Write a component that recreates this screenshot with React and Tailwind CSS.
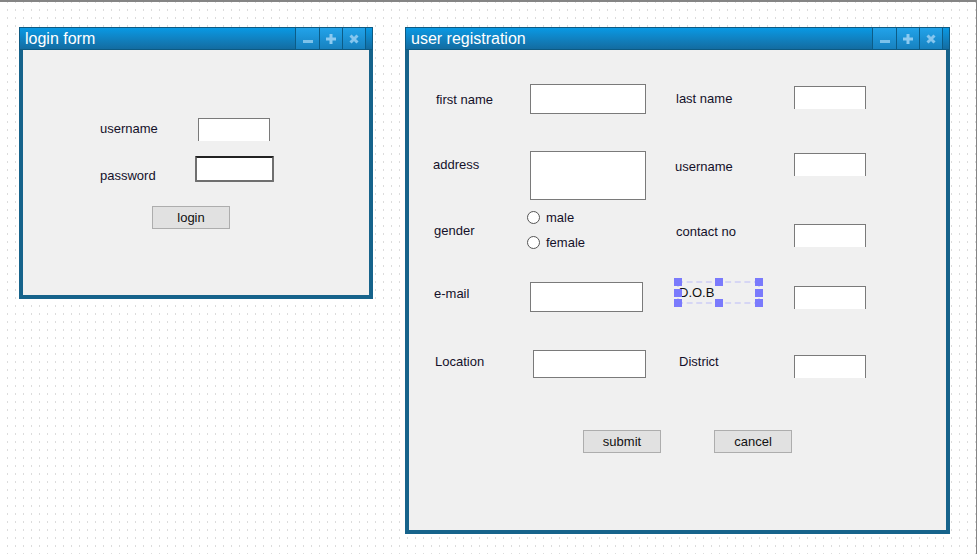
import React from 'react';

const font = "font-['Liberation_Sans',Arial,sans-serif]";

const TitleButtons = () => (
  <div className="mr-[6px] flex border-x border-[#0c5c87]">
    <div className="flex w-[23px] items-end justify-center bg-linear-to-b from-[#22a3ea] to-[#1781bf] pb-[6px]">
      <svg width="10" height="3" viewBox="0 0 10 3">
        <rect width="10" height="3" fill="#7cc2ea" />
      </svg>
    </div>
    <div className="flex w-[23px] items-center justify-center border-l border-[#0c5c87] bg-linear-to-b from-[#22a3ea] to-[#1781bf]">
      <svg width="10" height="10" viewBox="0 0 10 10">
        <rect x="3.5" width="3" height="10" fill="#8ccaf0" />
        <rect y="3.5" width="10" height="3" fill="#8ccaf0" />
      </svg>
    </div>
    <div className="flex w-[23px] items-center justify-center border-l border-[#0c5c87] bg-linear-to-b from-[#22a3ea] to-[#1781bf]">
      <svg width="10" height="10" viewBox="0 0 10 10">
        <path d="M1.5 1.5 L8.5 8.5 M8.5 1.5 L1.5 8.5" stroke="#86c6ee" strokeWidth="3" />
      </svg>
    </div>
  </div>
);

const Window = ({ title, className, children }) => (
  <div className={`absolute flex flex-col bg-[#16638b] ${className}`}>
    <div className="flex h-[23px] shrink-0 items-stretch border border-[#0d5a83] bg-linear-to-b from-[#0899e4] to-[#136ca1]">
      <span className={`flex-1 self-center pl-[5px] text-[16px] leading-none text-white ${font}`}>{title}</span>
      <TitleButtons />
    </div>
    <div className={`mx-1 mb-1 flex flex-1 flex-col bg-[#f0f0f0] ${font}`}>{children}</div>
  </div>
);

const Label = ({ className, children }) => (
  <span className={`w-[80px] shrink-0 text-[13px] leading-[15px] text-[#14102a] ${className}`}>{children}</span>
);

const Btn = ({ className, children }) => (
  <div className={`flex h-[23px] w-[78px] shrink-0 items-center justify-center border border-[#adadad] bg-[#e1e1e1] text-[13px] text-[#111] ${className}`}>
    {children}
  </div>
);

const Radio = ({ children }) => (
  <div className="flex h-[13px] items-center">
    <span className="h-[13px] w-[13px] rounded-full border border-[#555] bg-white" />
    <span className="ml-[6px] text-[13px] leading-[15px] text-[#14102a]">{children}</span>
  </div>
);

const Handle = ({ className }) => (
  <span className={`absolute h-[8px] w-[8px] bg-[#7a7afc] ${className}`} />
);

const App = () => {
  return (
    <div className="relative h-[554px] w-[977px] overflow-hidden border-t-2 border-r border-[#858585] bg-white bg-[conic-gradient(from_270deg_at_1px_2px,#dcdcdc_90deg,transparent_0)] bg-[length:8px_8px] bg-[position:7px_-1px]">
      <Window title="login form" className="left-[19px] top-[25px] h-[272px] w-[354px]">
        <div className="mt-[68px] flex items-start">
          <Label className="ml-[77px] mt-[3px]">username</Label>
          <div className="ml-[18px] h-[23px] w-[72px] border border-b-0 border-[#7a7a7a] bg-white" />
        </div>
        <div className="mt-[15px] flex items-start">
          <Label className="ml-[77px] mt-[12px]">password</Label>
          <div className="ml-[15px] h-[26px] w-[79px] rounded-[1px] border-2 border-[#6f6f6f] border-t-[#222] bg-white" />
        </div>
        <div className="mt-[23px] flex">
          <Btn className="ml-[129px] h-[22px]">login</Btn>
        </div>
      </Window>

      <Window title="user registration" className="left-[405px] top-[25px] h-[507px] w-[545px]">
        <div className="mt-[34px] flex items-start">
          <Label className="ml-[27px] mt-[8px]">first name</Label>
          <div className="ml-[14px] h-[30px] w-[116px] border border-[#7a7a7a] bg-white" />
          <Label className="ml-[30px] mt-[7px]">last name</Label>
          <div className="ml-[38px] mt-[2px] h-[23px] w-[72px] border border-b-0 border-[#7a7a7a] bg-white" />
        </div>

        <div className="mt-[37px] flex items-start">
          <Label className="ml-[24px] mt-[6px]">address</Label>
          <div className="ml-[17px] h-[49px] w-[116px] border border-[#7a7a7a] bg-white" />
          <Label className="ml-[29px] mt-[8px]">username</Label>
          <div className="ml-[39px] mt-[2px] h-[23px] w-[72px] border border-b-0 border-[#7a7a7a] bg-white" />
        </div>

        <div className="mt-[11px] flex items-start">
          <Label className="ml-[25px] mt-[12px]">gender</Label>
          <div className="ml-[13px] flex w-[120px] shrink-0 flex-col gap-[12px]">
            <Radio>male</Radio>
            <Radio>female</Radio>
          </div>
          <Label className="ml-[29px] mt-[13px]">contact no</Label>
          <div className="ml-[38px] mt-[13px] h-[23px] w-[72px] border border-b-0 border-[#7a7a7a] bg-white" />
        </div>

        <div className="mt-[29px] flex items-start">
          <Label className="ml-[25px] mt-[8px]">e-mail</Label>
          <div className="ml-[16px] mt-[4px] h-[30px] w-[113px] border border-[#7a7a7a] bg-white" />
          <div className="relative ml-[31px] h-[29px] w-[89px] shrink-0">
            <span className="absolute inset-[3px] border-2 border-dashed border-[#d6d6f4]" />
            <span className="absolute left-[5px] top-[7px] text-[13px] leading-[15px] text-[#111]">D.O.B</span>
            <Handle className="left-0 top-0" />
            <Handle className="left-[41px] top-0" />
            <Handle className="right-0 top-0" />
            <Handle className="left-0 top-[11px]" />
            <Handle className="right-0 top-[11px]" />
            <Handle className="bottom-0 left-0" />
            <Handle className="bottom-0 left-[41px]" />
            <Handle className="bottom-0 right-0" />
          </div>
          <div className="ml-[31px] mt-[8px] h-[23px] w-[72px] border border-b-0 border-[#7a7a7a] bg-white" />
        </div>

        <div className="mt-[38px] flex items-start">
          <Label className="ml-[26px] mt-[4px]">Location</Label>
          <div className="ml-[18px] h-[28px] w-[113px] border border-[#7a7a7a] bg-white" />
          <Label className="ml-[33px] mt-[4px]">District</Label>
          <div className="ml-[35px] mt-[5px] h-[23px] w-[72px] border border-b-0 border-[#7a7a7a] bg-white" />
        </div>

        <div className="mt-[52px] flex">
          <Btn className="ml-[174px]">submit</Btn>
          <Btn className="ml-[53px]">cancel</Btn>
        </div>
      </Window>
    </div>
  );
};

export default App;
